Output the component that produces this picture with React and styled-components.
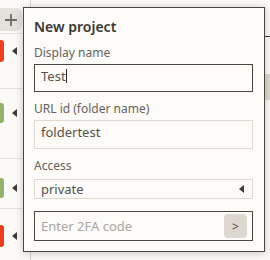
import React from 'react'
import styled, { createGlobalStyle } from 'styled-components'

const Global = createGlobalStyle`
  html, body {
    margin: 0;
    padding: 0;
    background: #fbfaf6;
    font-family: "Noto Sans", "Open Sans", sans-serif;
  }
  #root {
    width: 270px;
    height: 260px;
    overflow: hidden;
  }
`

const Page = styled.div`
  position: relative;
  display: flex;
  width: 270px;
  height: 260px;
  background: #fbfaf6;
`

const Sidebar = styled.div`
  width: 22px;
  display: flex;
  flex-direction: column;
  padding-top: 8px;
`

const PlusButton = styled.div`
  height: 23px;
  border-radius: 0 6px 6px 0;
  background: #e4e1db;
  display: flex;
  align-items: center;
  justify-content: center;
  margin-bottom: 2px;
`

const Item = styled.div`
  position: relative;
  height: ${p => p.$h}px;
  border-top: 1px solid #e2dfd8;
  display: flex;
  align-items: flex-start;
  padding-top: ${p => p.$top}px;
  box-sizing: border-box;
`

const Badge = styled.div`
  width: 4px;
  height: ${p => p.$size}px;
  border-radius: 0 3px 3px 0;
  background: ${p => p.$color};
`

const Arrow = styled.div`
  width: 0;
  height: 0;
  margin-left: 8px;
  margin-top: ${p => p.$size / 2 - 4}px;
  border-top: 4px solid transparent;
  border-bottom: 4px solid transparent;
  border-right: 5px solid #3a3a3a;
`

const Main = styled.div`
  flex: 1;
  margin-left: 8px;
  border-left: 1px solid #d6d3cb;
  display: flex;
  flex-direction: column;
`

const TopBar = styled.div`
  height: 36px;
  border-bottom: 1px solid #4a463d;
`

const GrayBlock = styled.div`
  margin-top: 37px;
  height: 26px;
  background: #dcd9d2;
`

const Panel = styled.div`
  position: absolute;
  left: 23px;
  top: 7px;
  width: 242px;
  height: 245px;
  box-sizing: border-box;
  padding: 10px 11px 10px 10px;
  background: #fcfbf8;
  border: 1px solid #4a463d;
  box-shadow: 0 1px 8px rgba(0, 0, 0, 0.22);
  display: flex;
  flex-direction: column;
`

const Title = styled.div`
  font-size: 14px;
  font-weight: 600;
  line-height: 18px;
  color: #3a3833;
  margin-bottom: 9px;
`

const Label = styled.div`
  font-size: 12px;
  line-height: 16px;
  color: #66635d;
  margin-bottom: ${p => p.$gap || 3}px;
`

const Field = styled.div`
  height: ${p => p.$h}px;
  box-sizing: border-box;
  border: 1px solid ${p => (p.$focus ? '#4a463d' : '#dedad2')};
  padding: 2px 6px;
  font-size: 13px;
  line-height: 18px;
  color: #55524c;
  margin-bottom: ${p => p.$gap}px;
  display: flex;
  align-items: ${p => (p.$center ? 'center' : 'flex-start')};
`

const Caret = styled.span`
  display: inline-block;
  width: 1px;
  height: 14px;
  margin-top: 2px;
  background: #2a2825;
`

const SelectBox = styled(Field)`
  justify-content: space-between;
  padding-right: 8px;
`

const SelectArrow = styled.div`
  width: 0;
  height: 0;
  border-top: 4px solid transparent;
  border-bottom: 4px solid transparent;
  border-right: 5px solid #3a3a3a;
`

const CodeBox = styled.div`
  height: 31px;
  box-sizing: border-box;
  border: 1px solid #4a463d;
  display: flex;
  align-items: center;
  padding: 0 5px 0 6px;
`

const CodeInput = styled.input`
  flex: 1;
  min-width: 0;
  border: none;
  outline: none;
  background: transparent;
  padding: 0;
  font-family: "Noto Sans", "Open Sans", sans-serif;
  font-size: 13px;
  color: #55524c;
  &::placeholder {
    color: #a9a6a0;
  }
`

const GoButton = styled.button`
  width: 23px;
  height: 24px;
  border: none;
  border-radius: 4px;
  background: #dcd8d0;
  color: #4f4c46;
  font-family: "Noto Sans", sans-serif;
  font-size: 12px;
  padding: 0;
  display: flex;
  align-items: center;
  justify-content: center;
`

const items = [
  { color: '#ef3f1f', h: 55, top: 6, size: 22 },
  { color: '#93b36b', h: 70, top: 14, size: 20 },
  { color: '#93b36b', h: 50, top: 19, size: 20 },
  { color: '#ef3f1f', h: 42, top: 16, size: 22 },
]

export default function App() {
  return (
    <Page>
      <Global />
      <Sidebar>
        <PlusButton>
          <svg width="14" height="14" viewBox="0 0 14 14">
            <path d="M7 1v12M1 7h12" stroke="#6e6c68" strokeWidth="1.8" />
          </svg>
        </PlusButton>
        {items.map((it, i) => (
          <Item key={i} $h={it.h} $top={it.top}>
            <Badge $color={it.color} $size={it.size} />
            <Arrow $size={it.size} />
          </Item>
        ))}
      </Sidebar>
      <Main>
        <TopBar />
        <GrayBlock />
      </Main>

      <Panel>
        <Title>New project</Title>
        <Label>Display name</Label>
        <Field $h={29} $gap={9} $focus>
          Test<Caret />
        </Field>
        <Label>URL id (folder name)</Label>
        <Field $h={30} $gap={9}>foldertest</Field>
        <Label $gap={5}>Access</Label>
        <SelectBox $h={20} $gap={12} $center>
          private
          <SelectArrow />
        </SelectBox>
        <CodeBox>
          <CodeInput placeholder="Enter 2FA code" />
          <GoButton>&gt;</GoButton>
        </CodeBox>
      </Panel>
    </Page>
  )
}
